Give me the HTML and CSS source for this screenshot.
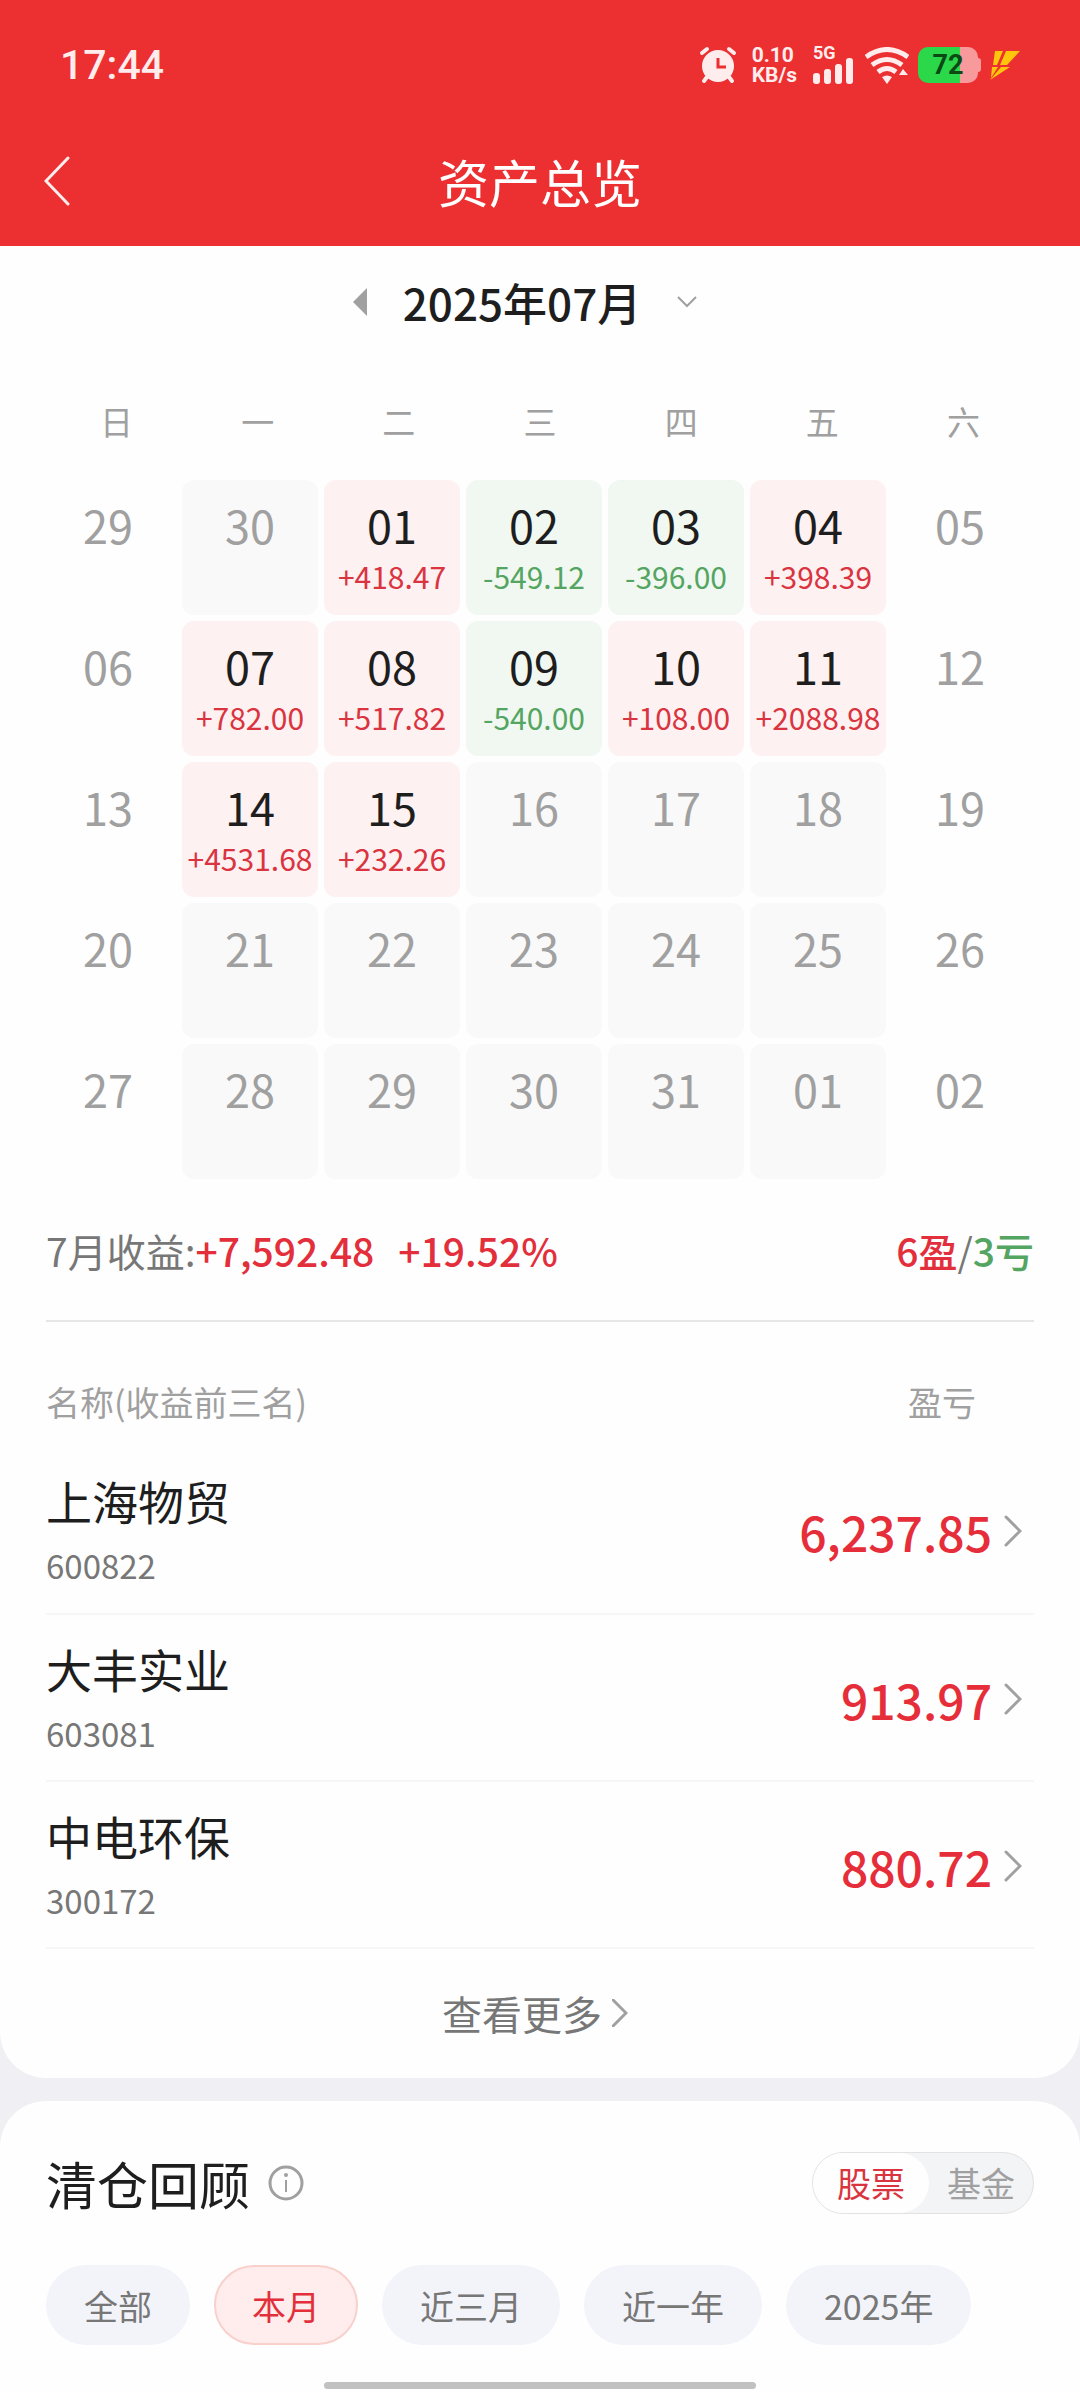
FILE: index.html
```html
<!DOCTYPE html>
<html lang="zh-CN">
<head>
    <meta charset="UTF-8">
    <meta name="viewport" content="width=device-width, initial-scale=1.0">
    <title>资产总览</title>
    <link rel="stylesheet" href="styles.css">
</head>
<body>
    <header class="header">
        <div class="status-bar">
            <div class="time">17:44</div>
            <div class="status-icons">
                <svg class="alarm" width="38" height="38" viewBox="0 0 38 38">
                    <g stroke="#ffecec" stroke-width="4" stroke-linecap="round">
                        <path d="M3 7l5-4M35 7l-5-4M8 31l-3 4M30 31l3 4"/>
                    </g>
                    <circle cx="19" cy="20" r="16" fill="#ffecec"/>
                    <path d="M19 12v9h8" fill="none" stroke="#ec2f31" stroke-width="3"/>
                </svg>
                <div class="speed"><span>0.10</span><span>KB/s</span></div>
                <div class="signal">
                    <span>5G</span>
                    <svg width="40" height="26" viewBox="0 0 40 26" fill="#ffecec">
                        <rect x="0" y="15" width="7" height="11" rx="3"/>
                        <rect x="11" y="11" width="7" height="15" rx="3"/>
                        <rect x="22" y="6" width="7" height="20" rx="3"/>
                        <rect x="33" y="0" width="7" height="26" rx="3"/>
                    </svg>
                </div>
                <svg class="wifi" width="44" height="37" viewBox="0 0 44 37">
                    <g fill="none" stroke="#ffecec" stroke-width="5">
                        <path d="M1 10Q22 -5 43 10"/>
                        <path d="M7 18Q22 7 37 18"/>
                        <path d="M13 25Q22 18 31 25"/>
                    </g>
                    <path d="M17 30q5-3 10 0l-5 7zM38 22l5 6h-9z" fill="#ffecec"/>
                </svg>
                <div class="battery"><span>72</span></div>
                <svg class="bolt" width="30" height="30" viewBox="0 0 30 30" fill="#ffc40c">
                    <path d="M5 1h8L7 15H3z"/>
                    <path d="M16 1h14L17 15h-7z"/>
                    <path d="M2 17h6L1 28z"/>
                    <path d="M11 17h9L0 30z"/>
                </svg>
            </div>
        </div>
        <nav class="nav-bar">
            <button class="back" aria-label="返回">
                <svg width="26" height="50" viewBox="0 0 26 50"><path d="M24 2L2 25l22 23" fill="none" stroke="#ffecec" stroke-width="3" stroke-linecap="round"/></svg>
            </button>
            <h1>资产总览</h1>
        </nav>
    </header>

    <main>
        <section class="card calendar-card">
            <div class="month-picker">
                <button aria-label="上个月"><svg width="14" height="28" viewBox="0 0 14 28"><path d="M14 0v28L0 14z" fill="#a0a0a0"/></svg></button>
                <h2>2025年07月</h2>
                <button aria-label="选择月份"><svg width="20" height="12" viewBox="0 0 20 12"><path d="M1 1l9 9 9-9" fill="none" stroke="#a0a0a0" stroke-width="2"/></svg></button>
            </div>

            <div class="weekdays">
                <span>日</span><span>一</span><span>二</span><span>三</span><span>四</span><span>五</span><span>六</span>
            </div>

            <div class="days">
                <div class="day">29</div>
                <div class="day work">30</div>
                <div class="day up">01<span>+418.47</span></div>
                <div class="day down">02<span>-549.12</span></div>
                <div class="day down">03<span>-396.00</span></div>
                <div class="day up">04<span>+398.39</span></div>
                <div class="day">05</div>

                <div class="day">06</div>
                <div class="day up">07<span>+782.00</span></div>
                <div class="day up">08<span>+517.82</span></div>
                <div class="day down">09<span>-540.00</span></div>
                <div class="day up">10<span>+108.00</span></div>
                <div class="day up">11<span>+2088.98</span></div>
                <div class="day">12</div>

                <div class="day">13</div>
                <div class="day up">14<span>+4531.68</span></div>
                <div class="day up">15<span>+232.26</span></div>
                <div class="day work">16</div>
                <div class="day work">17</div>
                <div class="day work">18</div>
                <div class="day">19</div>

                <div class="day">20</div>
                <div class="day work">21</div>
                <div class="day work">22</div>
                <div class="day work">23</div>
                <div class="day work">24</div>
                <div class="day work">25</div>
                <div class="day">26</div>

                <div class="day">27</div>
                <div class="day work">28</div>
                <div class="day work">29</div>
                <div class="day work">30</div>
                <div class="day work">31</div>
                <div class="day work">01</div>
                <div class="day">02</div>
            </div>

            <div class="summary">
                <div>7月收益:<b class="red">+7,592.48</b><b class="red rate">+19.52%</b></div>
                <div><b class="red">6盈</b>/<b class="green">3亏</b></div>
            </div>

            <table class="stocks">
                <thead>
                    <tr><th>名称(收益前三名)</th><th class="profit">盈亏</th></tr>
                </thead>
                <tbody>
                    <tr>
                        <td><div class="name">上海物贸</div><div class="code">600822</div></td>
                        <td><a class="amount" href="#600822">6,237.85<svg width="18" height="32" viewBox="0 0 18 32"><path d="M2 2l14 14L2 30"/></svg></a></td>
                    </tr>
                    <tr>
                        <td><div class="name">大丰实业</div><div class="code">603081</div></td>
                        <td><a class="amount" href="#603081">913.97<svg width="18" height="32" viewBox="0 0 18 32"><path d="M2 2l14 14L2 30"/></svg></a></td>
                    </tr>
                    <tr>
                        <td><div class="name">中电环保</div><div class="code">300172</div></td>
                        <td><a class="amount" href="#300172">880.72<svg width="18" height="32" viewBox="0 0 18 32"><path d="M2 2l14 14L2 30"/></svg></a></td>
                    </tr>
                </tbody>
            </table>

            <a class="more" href="#more">查看更多<svg width="16" height="28" viewBox="0 0 16 28"><path d="M1 1l13 13L1 27"/></svg></a>
        </section>

        <section class="card review-card">
            <div class="review-head">
                <h2>清仓回顾</h2>
                <button aria-label="说明">
                    <svg width="36" height="36" viewBox="0 0 36 36">
                        <circle cx="18" cy="18" r="16" fill="none" stroke="#a0a0a0" stroke-width="3"/>
                        <path d="M18 15v12" stroke="#a0a0a0" stroke-width="2"/>
                        <circle cx="18" cy="10" r="2" fill="#a0a0a0"/>
                    </svg>
                </button>
                <div class="switch">
                    <button class="active">股票</button>
                    <button>基金</button>
                </div>
            </div>
            <div class="ranges">
                <button>全部</button>
                <button class="active">本月</button>
                <button>近三月</button>
                <button>近一年</button>
                <button>2025年</button>
            </div>
            <div class="home-bar"></div>
        </section>
    </main>
</body>
</html>
```

FILE: styles.css
```css
* {
    box-sizing: border-box;
}
body {
    margin: 0;
    background: #efeff4;
    color: #1e1e1e;
    font-family: "Noto Sans CJK SC", sans-serif;
}
h1, h2 {
    margin: 0;
    font-weight: 400;
}
button {
    padding: 0;
    border: 0;
    background: none;
    color: inherit;
    font: inherit;
    cursor: pointer;
}
a {
    color: inherit;
    text-decoration: none;
}
svg {
    display: block;
}
b {
    font-weight: 500;
}
.red {
    color: #e22f3b;
}
.green {
    color: #55a562;
}

/* header */
.header {
    background: #ec2f31;
    color: #fff;
}
.status-bar {
    display: flex;
    align-items: center;
    justify-content: space-between;
    height: 116px;
    padding: 14px 60px 0;
    color: #ffecec;
}
.time {
    font: 500 41px/48px Roboto, sans-serif;
}
.status-icons {
    display: flex;
    align-items: center;
}
.speed {
    display: flex;
    flex-direction: column;
    margin-left: 15px;
    font: bold 21px/20px Roboto, sans-serif;
}
.signal {
    margin: 0 12px 0 16px;
    font: bold 18px/14px Roboto, sans-serif;
}
.signal svg {
    margin-top: -2px;
}
.signal span {
    display: block;
}
.battery {
    position: relative;
    width: 60px;
    height: 36px;
    margin: 0 12px 0 9px;
    border-radius: 10px;
    background: linear-gradient(90deg, #2ad84a 70%, #f89a9b 70%);
    color: #0b4a14;
    font: bold 27px/36px Roboto, sans-serif;
    text-align: center;
}
.battery::after {
    content: "";
    position: absolute;
    top: 11px;
    right: -3px;
    width: 3px;
    height: 14px;
    border-radius: 0 3px 3px 0;
    background: #f89a9b;
}
.nav-bar {
    display: grid;
    grid-template-columns: 26px 1fr 26px;
    align-items: center;
    height: 130px;
    padding: 0 44px;
}
.nav-bar h1 {
    font-size: 51px;
    line-height: 60px;
    text-align: center;
}

/* calendar */
.card {
    padding: 0 46px;
    border-radius: 46px;
    background: #fefefe;
}
.calendar-card {
    border-radius: 0 0 46px 46px;
}
.month-picker {
    display: flex;
    align-items: center;
    justify-content: center;
    gap: 36px;
    height: 112px;
    padding-right: 30px;
}
.month-picker h2 {
    font-size: 44px;
    font-weight: 500;
    line-height: 60px;
}
.weekdays {
    display: grid;
    grid-template-columns: repeat(7, 1fr);
    padding: 38px 0 34px;
    color: #a0a0a0;
    font-size: 33px;
    line-height: 50px;
    text-align: center;
}
.days {
    display: grid;
    grid-template-columns: repeat(7, 1fr);
    grid-auto-rows: 135px;
    gap: 6px;
    margin: 0 6px 0 -6px;
}
.day {
    padding-top: 20px;
    border-radius: 12px;
    color: #a0a0a0;
    font-size: 45px;
    line-height: 50px;
    text-align: center;
}
.day span {
    display: block;
    margin-top: 8px;
    font-size: 30px;
    line-height: 36px;
}
.work {
    background: #f9f9f9;
}
.up, .down {
    color: #1e1e1e;
}
.up {
    background: #fef1f2;
}
.up span {
    color: #d9343f;
}
.down {
    background: #f0f8f1;
}
.down span {
    color: #55a562;
}
.summary {
    display: flex;
    justify-content: space-between;
    padding: 44px 0 43px;
    border-bottom: 2px solid #e6e6e6;
    color: #777;
    font-size: 39px;
    line-height: 54px;
}
.rate {
    margin-left: 24px;
}

/* top three */
.stocks {
    width: 100%;
    border-collapse: collapse;
}
.stocks th {
    height: 125px;
    padding: 34px 0 0;
    color: #a0a0a0;
    font-size: 34px;
    font-weight: 400;
    line-height: 44px;
    text-align: left;
}
.stocks .profit {
    padding-right: 58px;
    text-align: right;
}
.stocks td {
    height: 167px;
    padding: 2px 0 0;
    border-bottom: 2px solid #f6f6f6;
}
.name {
    font-size: 46px;
    line-height: 60px;
}
.code {
    margin-top: 8px;
    color: #777;
    font-size: 33px;
    line-height: 54px;
}
.amount {
    display: flex;
    align-items: center;
    justify-content: flex-end;
    gap: 12px;
    padding-right: 12px;
    color: #e62e3a;
    font-size: 48px;
    font-weight: 500;
    line-height: 60px;
}
.amount path, .more path {
    fill: none;
    stroke: #a0a0a0;
    stroke-width: 3;
    stroke-linecap: round;
}
.more {
    display: flex;
    align-items: center;
    justify-content: center;
    gap: 10px;
    height: 129px;
    padding: 0 10px 2px 0;
    color: #777;
    font-size: 40px;
    line-height: 54px;
}

/* review */
.review-card {
    margin-top: 23px;
    padding-top: 51px;
    padding-bottom: 3px;
    border-radius: 46px 46px 0 0;
}
.review-head {
    display: flex;
    align-items: center;
    gap: 18px;
}
.review-head h2 {
    font-size: 51px;
    line-height: 60px;
}
.switch {
    display: flex;
    margin-left: auto;
    border: 1px solid #e2e2e2;
    border-radius: 31px;
    background: #f3f4f6;
    color: #a0a0a0;
    font-size: 34px;
    line-height: 60px;
}
.switch button {
    padding: 0 18px;
}
.switch .active {
    padding: 0 24px;
    border-radius: 30px;
    background: #fefefe;
    color: #d9343f;
}
.ranges {
    display: flex;
    gap: 24px;
    margin-top: 51px;
}
.ranges button {
    height: 80px;
    padding: 0 38px;
    border-radius: 40px;
    background: #f3f4fa;
    color: #777;
    font-size: 34px;
}
.ranges .active {
    padding: 0 36px;
    border: 2px solid #f8d0cc;
    background: #ffecec;
    color: #e22f3b;
}
.home-bar {
    width: 432px;
    height: 7px;
    margin: 37px auto 0;
    border-radius: 4px;
    background: #c1c1c1;
}
```
